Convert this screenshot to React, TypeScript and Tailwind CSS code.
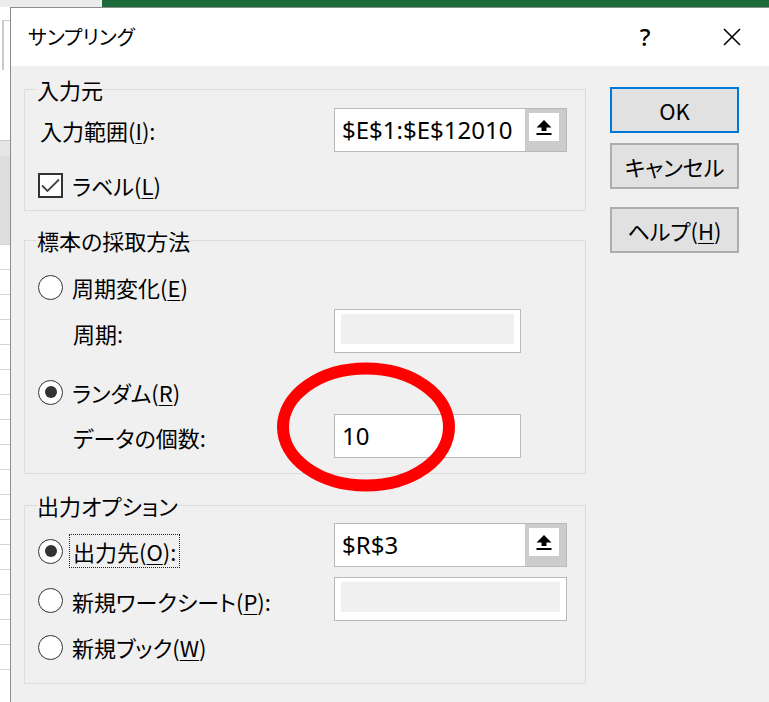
import { ReactNode } from 'react'

type RadioProps = {
  checked?: boolean
  children: ReactNode
}

const Key = ({ children }: { children: ReactNode }) => (
  <span className="underline decoration-1 underline-offset-[3px]">{children}</span>
)

function RadioDot({ checked }: { checked?: boolean }) {
  return (
    <span className="flex h-[25px] w-[25px] shrink-0 items-center justify-center rounded-full border-[1.5px] border-[#333] bg-white">
      {checked ? <span className="h-[12px] w-[12px] rounded-full bg-[#333]" /> : null}
    </span>
  )
}

function Radio({ checked, children }: RadioProps) {
  return (
    <div className="flex items-center">
      <RadioDot checked={checked} />
      <span className="ml-[9px] text-[22px] leading-[30px]">{children}</span>
    </div>
  )
}

function UpArrow() {
  return (
    <svg width="18" height="18" viewBox="0 0 18 18">
      <path d="M9 2 L16.5 9.5 H11.5 V13 H6.5 V9.5 H1.5 Z" fill="#000" />
      <rect x="1.5" y="15" width="15" height="2" fill="#000" />
    </svg>
  )
}

function RefInput({ value }: { value: string }) {
  return (
    <div className="flex h-[44px] w-[233px] border border-[#b9b9b9] bg-white">
      <div className="flex flex-1 items-center pl-[7px] font-['Noto_Sans',sans-serif] text-[24px] leading-none">
        {value}
      </div>
      <div className="w-[41px] bg-[#cccccc] pl-[4px] pt-[4px]">
        <div className="flex h-[28px] w-[30px] items-center justify-center bg-white">
          <UpArrow />
        </div>
      </div>
    </div>
  )
}

function PlainInput({ value, width = 'w-[187px]' }: { value?: string; width?: string }) {
  return (
    <div className={`flex h-[44px] ${width} items-center border border-[#b9b9b9] bg-white pl-[7px] font-['Noto_Sans',sans-serif] text-[24px] leading-none`}>
      {value}
    </div>
  )
}

function DisabledInput({ width = 'w-[187px]' }: { width?: string }) {
  return (
    <div className={`h-[44px] ${width} border border-[#b9b9b9] bg-white px-[6px] pb-[8px] pt-[4px]`}>
      <div className="h-full w-full bg-[#f0f0f0]" />
    </div>
  )
}

function Group({ title, className, children }: { title: string; className: string; children: ReactNode }) {
  return (
    <fieldset className={`border border-[#dcdcdc] px-[13px] ${className}`}>
      <legend className="ml-[-1px] px-0 text-[22px] leading-[22px]">{title}</legend>
      {children}
    </fieldset>
  )
}

function DialogButton({ children, primary, className }: { children: ReactNode; primary?: boolean; className: string }) {
  return (
    <button
      type="button"
      className={`flex h-[46px] w-[129px] items-center justify-center border-2 bg-[#e1e1e1] text-[22px] ${
        primary ? 'border-[#0078d7]' : 'border-[#adadad]'
      } ${className}`}
    >
      {children}
    </button>
  )
}

// the spreadsheet peeking out behind the dialog
function SheetEdge() {
  const rows = Array.from({ length: 18 })
  return (
    <div className="flex w-[10px] shrink-0 flex-col bg-white">
      <div className="h-[13px]" />
      <div className="ml-[2px] h-[50px] border-l-2 border-t border-[#c9c9c9]" />
      <div className="h-[70px]" />
      <div className="h-[16px] border-t border-[#c9c9c9] bg-[#e6e6e6]" />
      <div className="h-[88px] bg-[#dedede]" />
      {rows.map((_, i) => (
        <div key={i} className="h-[25px] border-t border-[#d4d4d4]" />
      ))}
    </div>
  )
}

export default function App() {
  return (
    <div className="relative flex h-[702px] w-[769px] flex-col overflow-hidden bg-[#f0f0f0] font-['Noto_Sans_CJK_JP',sans-serif] text-black [font-feature-settings:'palt']">
      <div className="flex h-[7px] shrink-0">
        <div className="w-[102px] bg-[#ececec]" />
        <div className="flex-1 bg-[#1d6a3b]" />
      </div>

      <div className="flex min-h-0 flex-1">
        <SheetEdge />

        <div className="flex flex-1 flex-col border-l border-t border-[#8c8c8c]">
          {/* title bar */}
          <div className="flex h-[58px] shrink-0 items-center bg-white pl-[17px]">
            <span className="text-[20px]">サンプリング</span>
            <div className="ml-auto mr-[14px] flex items-center gap-[42px]">
              <span className="w-[44px] text-center font-['Noto_Sans',sans-serif] text-[24px] font-medium">?</span>
              <span className="flex w-[46px] justify-center">
                <svg width="20" height="20" viewBox="0 0 20 20">
                  <path d="M2 2 L18 18 M18 2 L2 18" stroke="#000" strokeWidth="1.6" />
                </svg>
              </span>
            </div>
          </div>

          {/* body */}
          <div className="flex flex-1 pt-[12px]">
            <div className="ml-[13px] flex w-[562px] flex-col">
              <Group title="入力元" className="pb-[12px]">
                <div className="mt-[8px] flex h-[44px] items-center">
                  <span className="ml-[2px] w-[294px] text-[22px]">
                    入力範囲(<Key>I</Key>):
                  </span>
                  <RefInput value="$E$1:$E$12010" />
                </div>
                <div className="mt-[20px] flex h-[26px] items-center">
                  <span className="flex h-[25px] w-[25px] items-center justify-center border-2 border-[#333] bg-white">
                    <svg width="21" height="21" viewBox="0 0 21 21">
                      <path d="M2 10.5 L7.5 16 L19 4.5" fill="none" stroke="#444" strokeWidth="1.8" />
                    </svg>
                  </span>
                  <span className="ml-[9px] text-[22px]">
                    ラベル(<Key>L</Key>)
                  </span>
                </div>
              </Group>

              <Group title="標本の採取方法" className="mt-[18px] pb-[15px]">
                <div className="mt-[21px]">
                  <Radio>
                    周期変化(<Key>E</Key>)
                  </Radio>
                </div>
                <div className="mt-[7px] flex h-[44px] items-center">
                  <span className="mt-[5px] w-[296px] pl-[35px] text-[22px]">周期:</span>
                  <DisabledInput />
                </div>
                <div className="mt-[24px]">
                  <Radio checked>
                    ランダム(<Key>R</Key>)
                  </Radio>
                </div>
                <div className="mt-[7px] flex h-[44px] items-center">
                  <span className="mt-[2px] w-[296px] pl-[35px] text-[22px]">データの個数:</span>
                  <PlainInput value="10" />
                </div>
              </Group>

              <Group title="出力オプション" className="mt-[20px] pb-[21px]">
                <div className="mt-[7px] flex h-[44px] items-center">
                  <div className="mt-[12px] flex w-[296px] items-center">
                    <RadioDot checked />
                    <span className="ml-[6px] border border-dotted border-[#222] px-[3px] text-[22px] leading-[32px]">
                      出力先(<Key>O</Key>):
                    </span>
                  </div>
                  <RefInput value="$R$3" />
                </div>
                <div className="mt-[10px] flex h-[44px] items-center">
                  <div className="mt-[3px] w-[296px]">
                    <Radio>
                      新規ワークシート(<Key>P</Key>):
                    </Radio>
                  </div>
                  <DisabledInput width="w-[233px]" />
                </div>
                <div className="mt-[11px]">
                  <Radio>
                    新規ブック(<Key>W</Key>)
                  </Radio>
                </div>
              </Group>
            </div>

            <div className="ml-[24px] flex flex-col">
              <DialogButton primary className="mt-[9px]">
                OK
              </DialogButton>
              <DialogButton className="mt-[10px]">キャンセル</DialogButton>
              <DialogButton className="mt-[18px]">
                ヘルプ(<Key>H</Key>)
              </DialogButton>
            </div>
          </div>
        </div>
      </div>

      {/* red marker ring drawn over the sample-size field */}
      <svg className="pointer-events-none absolute left-0 top-0" width="769" height="702">
        <ellipse cx="366" cy="427" rx="83" ry="58.5" fill="none" stroke="#ff0000" strokeWidth="12" />
      </svg>
    </div>
  )
}
